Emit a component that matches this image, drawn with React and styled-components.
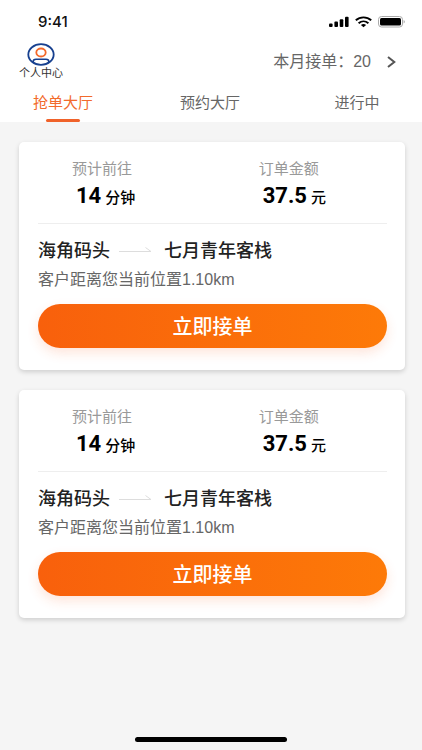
import React, { useState } from "react";
import styled, { createGlobalStyle } from "styled-components";

const GlobalStyle = createGlobalStyle`
  *, *::before, *::after { box-sizing: border-box; }
  body {
    margin: 0;
    background: #f5f5f5;
    color: #333;
    font-family: "Liberation Sans", "Noto Sans CJK SC", sans-serif;
  }
  button { font-family: inherit; border: 0; padding: 0; background: none; cursor: pointer; }
`;

const Screen = styled.div`
  min-height: 100vh;
  display: flex;
  flex-direction: column;
`;

const Top = styled.header`
  background: #fff;
`;

const StatusBar = styled.div`
  height: 42px;
  padding: 2px 17px 0 38px;
  display: flex;
  align-items: center;
  justify-content: space-between;
`;

const Time = styled.time`
  font: 500 15px/20px Inter, sans-serif;
  color: #111;
`;

const StatusIcons = styled.div`
  display: flex;
  align-items: center;
  gap: 6px;
`;

const AccountBar = styled.div`
  height: 40px;
  padding: 0 26px 0 19px;
  display: flex;
  align-items: flex-start;
  justify-content: space-between;
`;

const Profile = styled.button`
  display: flex;
  flex-direction: column;
  align-items: center;
  font-size: 11px;
  line-height: 14px;
  color: #333;
`;

const MonthCount = styled.button`
  height: 40px;
  display: flex;
  align-items: center;
  gap: 16px;
  font-size: 16px;
  line-height: 24px;
  color: #666;
`;

const Tabs = styled.nav`
  height: 40px;
  padding: 0 34px 0 32px;
  display: flex;
  justify-content: space-between;
`;

const Tab = styled.button`
  width: 62px;
  display: flex;
  flex-direction: column;
  align-items: center;
  justify-content: space-between;
  padding-top: 10px;
  font-size: 15px;
  line-height: 22px;
  white-space: nowrap;
  color: ${(p) => (p.$active ? "#f26a2c" : "#666")};

  &::after {
    content: "";
    width: 34px;
    height: 3px;
    border-radius: 2px;
    background: ${(p) => (p.$active ? "#f0622a" : "transparent")};
  }
`;

const OrderList = styled.main`
  flex: 1;
  padding: 20px 17px 20px 19px;
  display: flex;
  flex-direction: column;
  gap: 20px;
`;

const Card = styled.article`
  padding: 16px 18px 22px 19px;
  background: #fff;
  border-radius: 5px;
  box-shadow: 0 2px 5px rgba(0, 0, 0, 0.16);
`;

const Stats = styled.div`
  display: flex;
  justify-content: space-between;
  padding: 0 61px 12px 34px;
  border-bottom: 1px solid #eee;
`;

const Stat = styled.div`
  display: flex;
  flex-direction: column;
`;

const StatLabel = styled.span`
  font-size: 15px;
  line-height: 22px;
  white-space: nowrap;
  color: #999;
`;

const StatValue = styled.span`
  margin-top: 2px;
  padding-left: 4px;
  display: flex;
  align-items: baseline;
  gap: 4px;
  font: 700 22px/28px Roboto, sans-serif;
  white-space: nowrap;
  color: #000;
`;

const Unit = styled.span`
  font: 500 15px/28px "Noto Sans CJK SC", sans-serif;
`;

const Route = styled.h2`
  margin: 14px 0 0;
  display: flex;
  align-items: center;
  font-size: 18px;
  line-height: 26px;
  font-weight: 500;
  color: #222;

  svg { margin: 0 12px 0 9px; }
`;

const Distance = styled.p`
  margin: 4px 0 12px;
  font-size: 16px;
  line-height: 24px;
  color: #666;
`;

const AcceptButton = styled.button`
  width: 100%;
  height: 44px;
  padding-top: 2px;
  border-radius: 22px;
  background: linear-gradient(90deg, #f8600c, #fd7a08);
  box-shadow: 0 5px 12px rgba(250, 95, 30, 0.16);
  font-size: 20px;
  line-height: 28px;
  font-weight: 500;
  color: #fff;
`;

const HomeBar = styled.footer`
  padding-bottom: 8px;
  display: flex;
  justify-content: center;

  &::after {
    content: "";
    width: 36%;
    height: 5px;
    border-radius: 3px;
    background: #000;
  }
`;

const SignalIcon = () => (
  <svg width="20" height="12" viewBox="0 0 20 12" aria-hidden="true">
    <rect x="0" y="7.5" width="3.6" height="3.5" rx="1" />
    <rect x="5.4" y="5.5" width="3.6" height="5.5" rx="1" />
    <rect x="10.7" y="3.2" width="3.6" height="7.8" rx="1" />
    <rect x="16" y="0.8" width="3.6" height="10.2" rx="1" />
  </svg>
);

const WifiIcon = () => (
  <svg width="17" height="12" viewBox="0 0 17 12" fill="none" stroke="#000" strokeWidth="1.9" aria-hidden="true">
    <path d="M0.8 4.3C5.2 0.4 11.8 0.4 16.2 4.3" />
    <path d="M3.6 7.2C6.5 4.7 10.5 4.7 13.4 7.2" />
    <path d="M5.9 8.9Q8.5 7.1 11.1 8.9L8.5 11.2Z" fill="#000" stroke="none" />
  </svg>
);

const BatteryIcon = () => (
  <svg width="27" height="12" viewBox="0 0 27 12" aria-hidden="true">
    <rect x="0.5" y="0.5" width="24" height="10.5" rx="3" fill="none" stroke="#aaa" />
    <rect x="2" y="2" width="21" height="7.5" rx="1.5" />
    <path d="M25.7 4v3.6q1-.5 1-1.8t-1-1.8z" fill="#999" />
  </svg>
);

const ProfileIcon = () => (
  <svg width="28" height="24" viewBox="0 0 28 24" fill="none" aria-hidden="true">
    <ellipse cx="14" cy="12.5" rx="12.7" ry="10.3" stroke="#17408f" strokeWidth="1.8" />
    <ellipse cx="14" cy="10.5" rx="4.7" ry="4" stroke="#f4692a" strokeWidth="1.8" />
    <path d="M6.2 20.3V19.6Q6.2 17.3 9 17.3H19Q21.8 17.3 21.8 19.6V20.3" stroke="#17408f" strokeWidth="1.6" />
  </svg>
);

const ChevronIcon = () => (
  <svg width="9" height="12" viewBox="0 0 9 12" fill="none" stroke="#555" strokeWidth="2" aria-hidden="true">
    <path d="M1 1L7.3 6L1 11" />
  </svg>
);

const RouteArrow = () => (
  <svg width="33" height="8" viewBox="0 0 33 8" fill="none" stroke="#ddd" aria-hidden="true">
    <path d="M0 4.5H32L26.5 0.5" />
  </svg>
);

const tabs = ["抢单大厅", "预约大厅", "进行中"];

const orders = [
  { id: 1, minutes: "14", amount: "37.5", from: "海角码头", to: "七月青年客栈", distance: "1.10km" },
  { id: 2, minutes: "14", amount: "37.5", from: "海角码头", to: "七月青年客栈", distance: "1.10km" },
];

function OrderCard({ order }) {
  return (
    <Card>
      <Stats>
        <Stat>
          <StatLabel>预计前往</StatLabel>
          <StatValue>{order.minutes}<Unit>分钟</Unit></StatValue>
        </Stat>
        <Stat>
          <StatLabel>订单金额</StatLabel>
          <StatValue>{order.amount}<Unit>元</Unit></StatValue>
        </Stat>
      </Stats>
      <Route>
        <span>{order.from}</span>
        <RouteArrow />
        <span>{order.to}</span>
      </Route>
      <Distance>客户距离您当前位置{order.distance}</Distance>
      <AcceptButton type="button">立即接单</AcceptButton>
    </Card>
  );
}

export default function App() {
  const [active, setActive] = useState(0);
  return (
    <Screen lang="zh-CN">
      <GlobalStyle />
      <Top>
        <StatusBar>
          <Time>9:41</Time>
          <StatusIcons>
            <SignalIcon />
            <WifiIcon />
            <BatteryIcon />
          </StatusIcons>
        </StatusBar>
        <AccountBar>
          <Profile type="button">
            <ProfileIcon />
            <span>个人中心</span>
          </Profile>
          <MonthCount type="button">
            <span>本月接单：20</span>
            <ChevronIcon />
          </MonthCount>
        </AccountBar>
        <Tabs>
          {tabs.map((name, i) => (
            <Tab key={name} type="button" $active={i === active} onClick={() => setActive(i)}>
              {name}
            </Tab>
          ))}
        </Tabs>
      </Top>
      <OrderList>
        {orders.map((order) => <OrderCard key={order.id} order={order} />)}
      </OrderList>
      <HomeBar />
    </Screen>
  );
}
